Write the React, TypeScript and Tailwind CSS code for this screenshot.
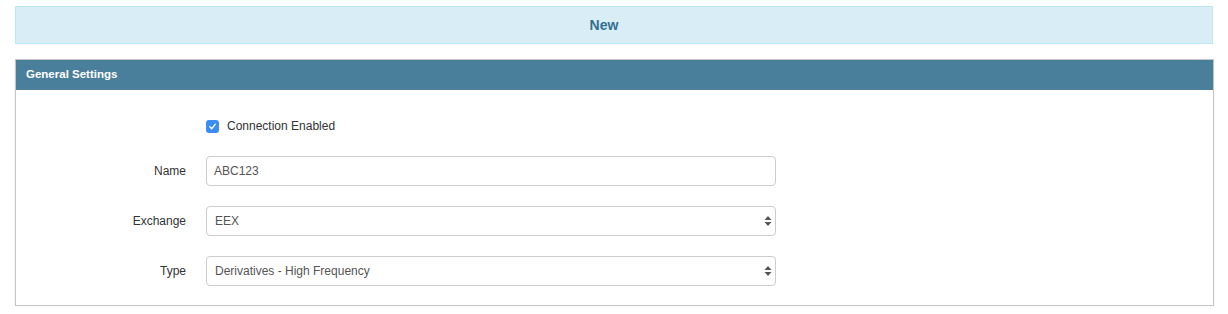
import React from 'react'

const Arrows: React.FC = () => (
    <svg width="8" height="12" viewBox="0 0 8 12" className="shrink-0">
        <path d="M4 1 L7.5 5 L0.5 5 Z" fill="#555" />
        <path d="M4 11 L7.5 7 L0.5 7 Z" fill="#555" />
    </svg>
)

const Row: React.FC<{ label: string; children: React.ReactNode }> = ({ label, children }) => (
    <div className="flex items-center h-[30px]">
        <div className="w-[170px] text-right text-[12px] text-[#333]">{label}</div>
        <div className="ml-[20px] w-[570px]">{children}</div>
    </div>
)

export default function App() {
    return (
        <div className="px-[15px] pt-[6px] bg-white" style={{ fontFamily: '"Liberation Sans", Arial, sans-serif' }}>
            <div className="h-[38px] border border-[#bce8f1] bg-[#d9edf7] flex items-center justify-center pr-[20px] text-[14px] font-bold text-[#31708f]">
                New
            </div>

            <div className="mt-[15px] w-[1199px] border border-[#c4c4c4] shadow-[0_1px_2px_rgba(0,0,0,0.08)]">
                <div className="h-[30px] bg-[#4a7f9b] flex items-center px-[10px] text-[11.5px] font-bold text-white">
                    General Settings
                </div>
                <div className="pt-[21px] pb-[19px] flex flex-col gap-[20px]">
                    <Row label="">
                        <div className="flex items-center gap-[8px]">
                            <span className="w-[13px] h-[13px] rounded-[3px] bg-[#3b8cf5] flex items-center justify-center">
                                <svg width="9" height="9" viewBox="0 0 10 10">
                                    <path d="M2 5.2 L4.2 7.4 L8 2.6" stroke="white" strokeWidth="1.6" fill="none" strokeLinecap="round" strokeLinejoin="round" />
                                </svg>
                            </span>
                            <span className="text-[12px] text-[#333]">Connection Enabled</span>
                        </div>
                    </Row>
                    <div className="-mt-[5px]">
                        <Row label="Name">
                            <div className="h-[30px] border border-[#ccc] rounded-[4px] flex items-center px-[7px] text-[12px] text-[#555]">
                                ABC123
                            </div>
                        </Row>
                    </div>
                    <Row label="Exchange">
                        <div className="h-[30px] border border-[#ccc] rounded-[4px] flex items-center justify-between pl-[8px] pr-[3px] text-[12px] text-[#555]">
                            <span>EEX</span>
                            <Arrows />
                        </div>
                    </Row>
                    <Row label="Type">
                        <div className="h-[30px] border border-[#ccc] rounded-[4px] flex items-center justify-between pl-[8px] pr-[3px] text-[12px] text-[#555]">
                            <span>Derivatives - High Frequency</span>
                            <Arrows />
                        </div>
                    </Row>
                </div>
            </div>
        </div>
    )
}
